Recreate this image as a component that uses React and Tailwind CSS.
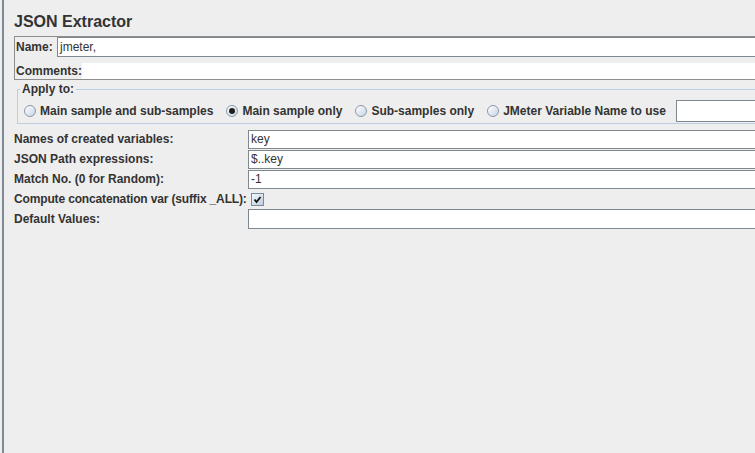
import React from 'react';

function Radio({ label, checked, last }) {
  return (
    <div className={last ? 'flex items-center' : 'flex items-center mr-[13px]'}>
      <div className="w-[12px] h-[12px] rounded-full border border-[#8a99a8] bg-linear-to-br from-white to-[#c6d5e4] flex items-center justify-center shrink-0">
        {checked && <div className="w-[6px] h-[6px] rounded-full bg-[#1e1e1e]" />}
      </div>
      <span className="ml-[4px] font-bold whitespace-nowrap">{label}</span>
    </div>
  );
}

function FieldRow({ label, value, tall }) {
  return (
    <div className="flex items-center h-[20px]">
      <div className="w-[234px] font-bold whitespace-nowrap">{label}</div>
      <div className={tall
        ? 'flex-1 h-[20px] border border-[#80888f] bg-white pl-[2px] flex items-center'
        : 'flex-1 h-[19px] border border-[#80888f] bg-white pl-[2px] flex items-center'}>
        {value}
      </div>
    </div>
  );
}

export default function App() {
  return (
    <div className="w-[755px] h-[453px] bg-[#eeeeee] overflow-hidden flex font-['Liberation_Sans',Arial,sans-serif] text-[12px] text-[#333333]">
      <div className="ml-[2px] w-[2px] bg-[#7a8a99] shrink-0" />
      <div className="w-[775px] shrink-0 flex flex-col">
        <div className="mt-[12px] pl-[10px] text-[16px] leading-[20px] font-bold">JSON Extractor</div>

        {/* name / comments */}
        <div className="mt-[4px] ml-[10px] border border-[#8e8e8e]">
          <div className="flex h-[20px]">
            <div className="w-[42px] pl-[1px] font-bold flex items-center">Name:</div>
            <div className="flex-1 border border-[#80888f] bg-white pl-[2px] flex items-center">jmeter,</div>
          </div>
          <div className="flex items-end h-[22px]">
            <div className="w-[67px] pl-[1px] font-bold leading-[16px]">Comments:</div>
            <div className="flex-1 h-[16px] bg-white" />
          </div>
        </div>

        {/* apply to */}
        <fieldset className="mt-[2px] ml-[13px] border border-[#b8cfe5]">
          <legend className="ml-[2px] px-[2px] font-bold leading-[14px]">Apply to:</legend>
          <div className="pt-[4px] pb-[1px]">
            <div className="flex items-center h-[22px] pl-[6px]">
              <Radio label="Main sample and sub-samples" />
              <Radio label="Main sample only" checked />
              <Radio label="Sub-samples only" />
              <Radio label="JMeter Variable Name to use" last />
              <div className="ml-[10px] w-[100px] h-[22px] border border-[#80888f] bg-white" />
            </div>
          </div>
        </fieldset>

        <div className="mt-[5px] pl-[10px]">
          <FieldRow label="Names of created variables:" value="key" />
          <FieldRow label="JSON Path expressions:" value="$..key" />
          <FieldRow label="Match No. (0 for Random):" value="-1" />
          <div className="flex items-center h-[20px]">
            <span className="font-bold whitespace-nowrap tracking-[-0.15px]">Compute concatenation var (suffix _ALL):</span>
            <div className="ml-[4px] w-[13px] h-[13px] border border-[#7a8a99] bg-linear-to-br from-[#f4f8fc] to-[#bccddf] flex items-center justify-center">
              <svg width="11" height="11" viewBox="0 0 11 11">
                <path d="M2.5 5.5 L4.5 8 L8.5 3" fill="none" stroke="#111" strokeWidth="1.8" />
              </svg>
            </div>
          </div>
          <FieldRow label="Default Values:" value="" tall />
        </div>
      </div>
    </div>
  );
}
